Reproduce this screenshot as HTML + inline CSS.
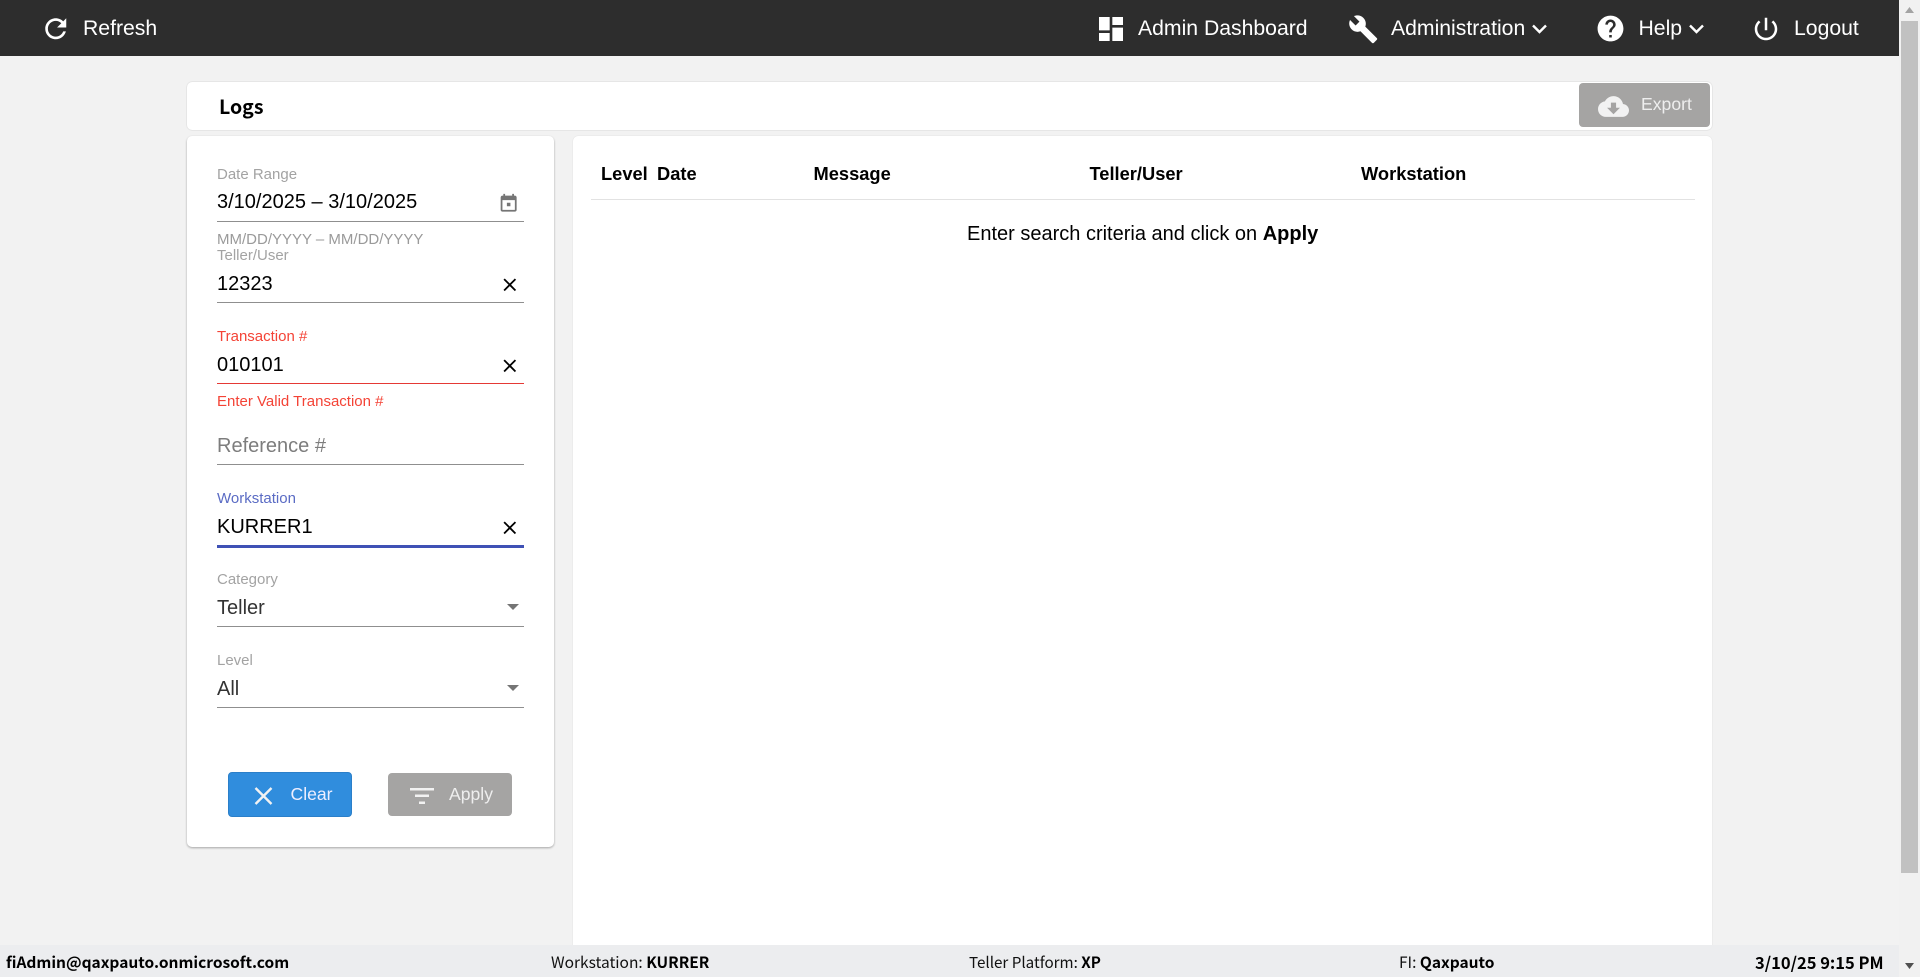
<!DOCTYPE html>
<html lang="en">
<head>
<meta charset="utf-8">
<title>Logs</title>
<style>
html,body{margin:0;padding:0;width:1920px;height:977px;overflow:hidden;background:#f2f2f2;font-family:"Liberation Sans",Arial,sans-serif;color:#000}
*{box-sizing:border-box}
.a{position:absolute;white-space:nowrap}
svg{position:absolute;display:block}
.t{position:absolute;white-space:nowrap;line-height:24px;height:24px}
.nav{color:#fff;font-size:21.2px}
.lab{font-size:15px;color:#a3a3a3}
.val{font-size:20px;color:#000}
.sel{font-size:20px;color:#333}
.ul{position:absolute;left:217px;width:307px;height:1px;background:#8f8f8f}
.th{font-size:18.3px;font-weight:bold}
.ft{font-family:"Noto Sans CJK JP","Liberation Sans",sans-serif;font-size:15.5px;color:#111}
.ft b{font-weight:700;color:#000}
.card{position:absolute;background:#fff;border-radius:5px}
</style>
</head>
<body>
<!-- header -->
<div class="a" style="left:0;top:0;width:1899px;height:56px;background:#2d2d2d"></div>
<svg style="left:39.800px;top:13.300px" width="31.500" height="31.500" viewBox="0 0 24 24" fill="#fff"><path d="M17.65 6.35C16.2 4.9 14.21 4 12 4c-4.42 0-7.99 3.58-7.99 8s3.57 8 7.99 8c3.73 0 6.84-2.55 7.73-6h-2.08c-.82 2.33-3.04 4-5.65 4-3.31 0-6-2.69-6-6s2.69-6 6-6c1.66 0 3.14.69 4.22 1.78L13 11h7V4l-2.35 2.35z"/></svg>
<div class="t nav" style="left:83px;top:17px">Refresh</div>

<svg style="left:1095px;top:13px" width="32" height="32" viewBox="0 0 24 24" fill="#fff"><path d="M3 13h8V3H3v10zm0 8h8v-6H3v6zm10 0h8V11h-8v10zm0-18v6h8V3h-8z"/></svg>
<div class="t nav" style="left:1138px;top:17px">Admin Dashboard</div>

<svg style="left:1348px;top:14px" width="30.500" height="30.500" viewBox="0 0 24 24" fill="#fff"><path d="M22.7 19l-9.1-9.1c.9-2.3.4-5-1.5-6.9-2-2-5-2.4-7.4-1.3L9 6 6 9 1.6 4.7C.4 7.1.9 10.1 2.9 12.1c1.9 1.9 4.6 2.4 6.9 1.5l9.1 9.1c.4.4 1 .4 1.4 0l2.3-2.3c.5-.4.5-1.1.1-1.4z"/></svg>
<div class="t nav" style="left:1391px;top:17px">Administration</div>
<svg style="left:1531px;top:24px" width="17" height="10" viewBox="0 0 17 10" fill="none" stroke="#fff" stroke-width="2.4"><path d="M2 1.5l6.5 6.5 6.5-6.5"/></svg>

<svg style="left:1595.400px;top:13.400px" width="31" height="31" viewBox="0 0 24 24" fill="#fff"><path d="M12 2C6.48 2 2 6.48 2 12s4.48 10 10 10 10-4.48 10-10S17.52 2 12 2zm1 17h-2v-2h2v2zm2.07-7.75l-.9.92C13.45 12.9 13 13.5 13 15h-2v-.5c0-1.1.45-2.1 1.17-2.83l1.24-1.26c.37-.36.59-.86.59-1.41 0-1.1-.9-2-2-2s-2 .9-2 2H8c0-2.21 1.79-4 4-4s4 1.79 4 4c0 .88-.36 1.68-.93 2.25z"/></svg>
<div class="t nav" style="left:1638.500px;top:17px">Help</div>
<svg style="left:1688px;top:24px" width="17" height="10" viewBox="0 0 17 10" fill="none" stroke="#fff" stroke-width="2.4"><path d="M2 1.5l6.5 6.5 6.5-6.5"/></svg>

<svg style="left:1751px;top:14px" width="30" height="30" viewBox="0 0 24 24" fill="#fff"><path d="M13 3h-2v10h2V3zm4.83 2.17l-1.42 1.42C17.99 7.86 19 9.81 19 12c0 3.87-3.13 7-7 7s-7-3.13-7-7c0-2.19 1.01-4.14 2.58-5.42L6.17 5.17C4.23 6.82 3 9.26 3 12c0 4.97 4.03 9 9 9s9-4.03 9-9c0-2.74-1.23-5.18-3.17-6.83z"/></svg>
<div class="t nav" style="left:1794px;top:17px">Logout</div>

<!-- title card -->
<div class="card" style="left:187px;top:81.500px;width:1525px;height:48px;box-shadow:0 0 1.500px rgba(0,0,0,.2)"></div>
<div class="t" style="left:219px;top:94px;font-size:19.500px;font-weight:bold;font-family:'Noto Sans CJK JP','Liberation Sans',sans-serif">Logs</div>
<div class="a" style="left:1579px;top:83px;width:131px;height:43.500px;background:#a5a4a3;border-radius:4px"></div>
<svg style="left:1598px;top:91px" width="31" height="31" viewBox="0 0 24 24" fill="#f2f2f2"><path d="M19.35 10.04C18.67 6.59 15.64 4 12 4 9.11 4 6.6 5.64 5.35 8.04 2.34 8.36 0 10.91 0 14c0 3.31 2.69 6 6 6h13c2.76 0 5-2.24 5-5 0-2.64-2.05-4.78-4.65-4.96zM17 13l-5 5-5-5h3V9h4v4h3z"/></svg>
<div class="t" style="left:1641px;top:92px;font-size:17.600px;color:#eee">Export</div>

<!-- filter card -->
<div class="card" style="left:187px;top:136px;width:367px;height:711px;box-shadow:0 1px 2px rgba(0,0,0,.32)"></div>

<div class="t lab" style="left:217px;top:163px">Date Range</div>
<div class="t val" style="left:217px;top:190px">3/10/2025 – 3/10/2025</div>
<svg style="left:498.300px;top:193px" width="21.300" height="21.300" viewBox="0 0 24 24" fill="#757575"><path d="M19 3h-1V1h-2v2H8V1H6v2H5c-1.11 0-1.99.9-1.99 2L3 19c0 1.1.89 2 2 2h14c1.1 0 2-.9 2-2V5c0-1.1-.9-2-2-2zm0 16H5V8h14v11zM10 11h4v4h-4z"/></svg>
<div class="ul" style="top:221px"></div>
<div class="t lab" style="left:217px;top:228px;color:#9a9a9a">MM/DD/YYYY – MM/DD/YYYY</div>

<div class="t lab" style="left:217px;top:243.500px">Teller/User</div>
<div class="t val" style="left:217px;top:272px">12323</div>
<svg style="left:498.700px;top:274.200px" width="21.600" height="21.600" viewBox="0 0 24 24" fill="#000"><path d="M19 6.41L17.59 5 12 10.59 6.41 5 5 6.41 10.59 12 5 17.59 6.41 19 12 13.41 17.59 19 19 17.59 13.41 12z"/></svg>
<div class="ul" style="top:302px"></div>

<div class="t lab" style="left:217px;top:325px;color:#f44336">Transaction #</div>
<div class="t val" style="left:217px;top:352.500px">010101</div>
<svg style="left:498.700px;top:355.200px" width="21.600" height="21.600" viewBox="0 0 24 24" fill="#000"><path d="M19 6.41L17.59 5 12 10.59 6.41 5 5 6.41 10.59 12 5 17.59 6.41 19 12 13.41 17.59 19 19 17.59 13.41 12z"/></svg>
<div class="ul" style="top:383px;background:#e53935"></div>
<div class="t lab" style="left:217px;top:390px;color:#f44336">Enter Valid Transaction #</div>

<div class="t val" style="left:217px;top:434px;color:#7d7d7d">Reference #</div>
<div class="ul" style="top:464px"></div>

<div class="t lab" style="left:217px;top:487px;color:#5a6bc4">Workstation</div>
<div class="t val" style="left:217px;top:515px">KURRER1</div>
<svg style="left:498.700px;top:517.200px" width="21.600" height="21.600" viewBox="0 0 24 24" fill="#000"><path d="M19 6.41L17.59 5 12 10.59 6.41 5 5 6.41 10.59 12 5 17.59 6.41 19 12 13.41 17.59 19 19 17.59 13.41 12z"/></svg>
<div class="ul" style="top:545px;height:3px;background:#3f51b5"></div>

<div class="t lab" style="left:217px;top:568px">Category</div>
<div class="t sel" style="left:217px;top:596px">Teller</div>
<svg style="left:507px;top:604px" width="12" height="6" viewBox="0 0 12 6" fill="#757575"><path d="M0 0h12L6 6z"/></svg>
<div class="ul" style="top:626px"></div>

<div class="t lab" style="left:217px;top:649px">Level</div>
<div class="t sel" style="left:217px;top:677px">All</div>
<svg style="left:507px;top:685px" width="12" height="6" viewBox="0 0 12 6" fill="#757575"><path d="M0 0h12L6 6z"/></svg>
<div class="ul" style="top:707px"></div>

<!-- buttons -->
<div class="a" style="left:228px;top:772px;width:124px;height:45px;background:#308ddd;border:1px solid #2b7fc9;border-radius:4px"></div>
<svg style="left:253.500px;top:787px" width="19" height="18" viewBox="0 0 19 18" fill="none" stroke="#f2f2f2" stroke-width="2.4"><path d="M1.5 1l16 16M17.5 1l-16 16"/></svg>
<div class="t" style="left:290.500px;top:781.500px;font-size:17.600px;color:#eef">Clear</div>

<div class="a" style="left:388px;top:773px;width:124px;height:43px;background:#a5a4a3;border-radius:4px"></div>
<svg style="left:410px;top:788px" width="24" height="16" viewBox="0 0 24 16" fill="#f2f2f2"><path d="M0 0h24v2.500H0zM5 6.500h14V9H5zM9 13.500h6V16H9z"/></svg>
<div class="t" style="left:449px;top:782px;font-size:17.600px;color:#eee">Apply</div>

<!-- table card -->
<div class="card" style="left:573px;top:136px;width:1139px;height:840px;box-shadow:0 0 1px rgba(0,0,0,.16)"></div>
<div class="t th" style="left:601px;top:162px">Level</div>
<div class="t th" style="left:657px;top:162px">Date</div>
<div class="t th" style="left:813.500px;top:162px">Message</div>
<div class="t th" style="left:1089.500px;top:162px">Teller/User</div>
<div class="t th" style="left:1361px;top:162px">Workstation</div>
<div class="a" style="left:591px;top:199px;width:1104px;height:1px;background:#e2e2e2"></div>
<div class="t" style="left:967px;top:222px;font-size:20px">Enter search criteria and click on <b>Apply</b></div>

<!-- footer -->
<div class="a" style="left:0;top:945px;width:1899px;height:32px;background:#ecedef"></div>
<div class="t ft" style="left:6px;top:950px"><b>fiAdmin@qaxpauto.onmicrosoft.com</b></div>
<div class="t ft" style="left:551px;top:950px">Workstation: <b>KURRER</b></div>
<div class="t ft" style="left:969px;top:950px;font-size:15.200px">Teller Platform: <b>XP</b></div>
<div class="t ft" style="left:1399px;top:950px">FI: <b>Qaxpauto</b></div>
<div class="t ft" style="left:1755px;top:950px;font-size:16.500px"><b>3/10/25 9:15 PM</b></div>

<!-- scrollbar -->
<div class="a" style="left:1899px;top:0;width:21px;height:977px;background:#f1f1f1"></div>
<div class="a" style="left:1901px;top:21px;width:17px;height:852px;background:#c1c1c1"></div>
<svg style="left:1905px;top:7px" width="9" height="6" viewBox="0 0 9 6" fill="#a3a3a3"><path d="M4.500 0L9 6H0z"/></svg>
<svg style="left:1905px;top:963px" width="9" height="6" viewBox="0 0 9 6" fill="#505050"><path d="M0 0h9L4.500 6z"/></svg>
</body>
</html>
